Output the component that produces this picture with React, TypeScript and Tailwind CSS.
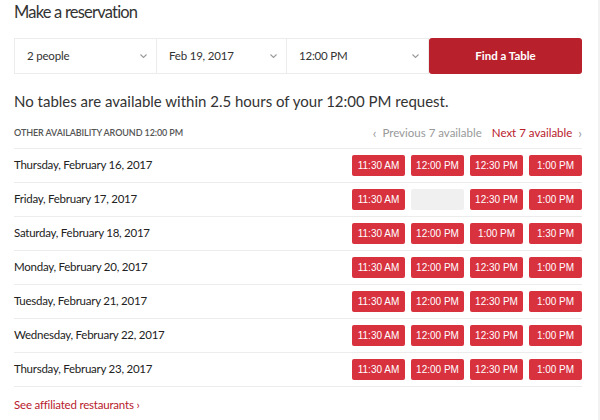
import React from "react";

const rows: { date: string; slots: (string | null)[] }[] = [
  { date: "Thursday, February 16, 2017", slots: ["11:30 AM", "12:00 PM", "12:30 PM", "1:00 PM"] },
  { date: "Friday, February 17, 2017", slots: ["11:30 AM", null, "12:30 PM", "1:00 PM"] },
  { date: "Saturday, February 18, 2017", slots: ["11:30 AM", "12:00 PM", "1:00 PM", "1:30 PM"] },
  { date: "Monday, February 20, 2017", slots: ["11:30 AM", "12:00 PM", "12:30 PM", "1:00 PM"] },
  { date: "Tuesday, February 21, 2017", slots: ["11:30 AM", "12:00 PM", "12:30 PM", "1:00 PM"] },
  { date: "Wednesday, February 22, 2017", slots: ["11:30 AM", "12:00 PM", "12:30 PM", "1:00 PM"] },
  { date: "Thursday, February 23, 2017", slots: ["11:30 AM", "12:00 PM", "12:30 PM", "1:00 PM"] },
];

function Chevron() {
  return (
    <svg width="9" height="6" viewBox="0 0 9 6" fill="none">
      <path d="M1.5 1.5 L4.5 4.5 L7.5 1.5" stroke="#9a9a9a" strokeWidth="1.1" />
    </svg>
  );
}

function Select({ label, w }: { label: string; w: string }) {
  return (
    <div className={`flex items-center justify-between pl-[12px] pr-[8px] border-r border-[#ececec] ${w}`}>
      <span className="text-[11.5px] text-[#333] tracking-[-0.2px]">{label}</span>
      <Chevron />
    </div>
  );
}

export default function App() {
  return (
    <div
      className="w-[600px] h-[420px] bg-white border-r-2 border-[#f2f2f2] overflow-hidden"
      style={{ fontFamily: "Lato, 'Open Sans', sans-serif" }}
    >
      <div className="pl-[14px] pr-[16px]">
        <h1 className="text-[16.5px] leading-[22px] pt-[1px] text-[#333] tracking-[-0.8px]">Make a reservation</h1>
        <div className="flex h-[36px] mt-[15px]">
          <div className="flex border border-[#ececec] border-r-0">
            <Select label="2 people" w="w-[142px]" />
            <Select label="Feb 19, 2017" w="w-[130px]" />
            <Select label="12:00 PM" w="w-[142px]" />
          </div>
          <button className="flex-1 bg-[#b8202c] rounded-[3px] text-white text-[11.5px] font-bold">Find a Table</button>
        </div>
        <p className="mt-[17px] text-[15px] leading-[20px] text-[#333]">
          No tables are available within 2.5 hours of your 12:00 PM request.
        </p>
        <div className="flex items-center justify-between mt-[13px] h-[18px]">
          <span className="text-[9px] font-semibold text-[#555] uppercase tracking-[-0.1px]">
            Other availability around 12:00 PM
          </span>
          <div className="flex items-center text-[11.5px]">
            <span className="text-[#999] flex items-center gap-[6px]">
              <span className="text-[13px] leading-none">‹</span>Previous 7 available
            </span>
            <span className="ml-[10px] text-[#b8202c] flex items-center gap-[6px]">
              Next 7 available<span className="text-[#999] text-[13px] leading-none">›</span>
            </span>
          </div>
        </div>
        <div className="mt-[6px]">
          {rows.map((r) => (
            <div key={r.date} className="flex items-center justify-between h-[34px] border-t border-[#ececec]">
              <span className="text-[11.5px] text-[#222] tracking-[-0.25px] -mt-[2px]">{r.date}</span>
              <div className="flex gap-[6px]" style={{ fontFamily: "'Liberation Sans', Arial, sans-serif" }}>
                {r.slots.map((s, i) =>
                  s ? (
                    <div
                      key={i}
                      className="w-[53px] h-[21px] rounded-[2px] bg-[#d8323f] text-white text-[10px] flex items-center justify-center"
                    >
                      {s}
                    </div>
                  ) : (
                    <div key={i} className="w-[53px] h-[21px] rounded-[2px] bg-[#f0f0f0]" />
                  )
                )}
              </div>
            </div>
          ))}
          <div className="border-t border-[#ececec] pt-[6px] leading-[20px]">
            <span className="text-[11.5px] text-[#b8202c] tracking-[-0.2px]">See affiliated restaurants ›</span>
          </div>
        </div>
      </div>
    </div>
  );
}
